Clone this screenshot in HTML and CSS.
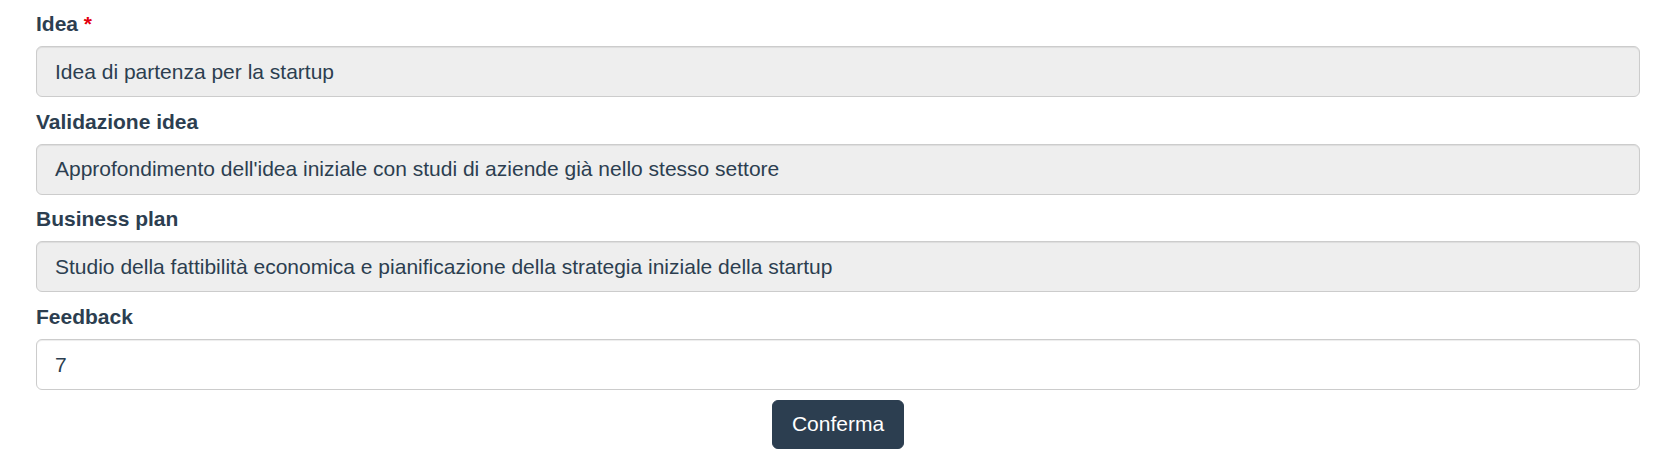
FILE: index.html
```html
<!DOCTYPE html>
<html lang="it">
<head>
<meta charset="utf-8">
<title>Startup</title>
<link rel="stylesheet" href="styles.css">
</head>
<body>
<form class="form">
  <div class="group">
    <label class="label">Idea <span class="req">*</span></label>
    <div class="field field-disabled">Idea di partenza per la startup</div>
  </div>
  <div class="group">
    <label class="label">Validazione idea</label>
    <div class="field field-disabled">Approfondimento dell'idea iniziale con studi di aziende già nello stesso settore</div>
  </div>
  <div class="group">
    <label class="label">Business plan</label>
    <div class="field field-disabled">Studio della fattibilità economica e pianificazione della strategia iniziale della startup</div>
  </div>
  <div class="group">
    <label class="label">Feedback</label>
    <div class="field">7</div>
  </div>
  <div class="actions">
    <button type="button" class="btn">Conferma</button>
  </div>
</form>
</body>
</html>
```
FILE: styles.css
```css
html, body {
  margin: 0;
  padding: 0;
  background: #fff;
}
body {
  font-family: "Liberation Sans", Arial, sans-serif;
  color: #2c3e50;
}
.form {
  display: flex;
  flex-direction: column;
  gap: 9.7px;
  padding: 9px 31px 0 36px;
}
.group {
  display: flex;
  flex-direction: column;
  gap: 7px;
}
.label {
  font-weight: bold;
  font-size: 21px;
  line-height: 30px;
  color: #2c3e50;
}
.req {
  color: #e3000f;
}
.field {
  box-sizing: border-box;
  height: 51px;
  border: 1px solid #cccccc;
  border-radius: 6px;
  padding: 0 18px;
  display: flex;
  align-items: center;
  font-size: 21px;
  color: #2c3e50;
  background: #fff;
  box-shadow: inset 0 1px 1px rgba(0,0,0,0.075);
  white-space: nowrap;
}
.field-disabled {
  background: #eeeeee;
}
.actions {
  display: flex;
  justify-content: center;
}
.btn {
  box-sizing: border-box;
  height: 49px;
  padding: 0 19px;
  border: 1px solid #2c3e50;
  border-radius: 6px;
  background: #2c3e50;
  color: #fff;
  font-family: "Liberation Sans", Arial, sans-serif;
  font-size: 21px;
  cursor: pointer;
}
```
